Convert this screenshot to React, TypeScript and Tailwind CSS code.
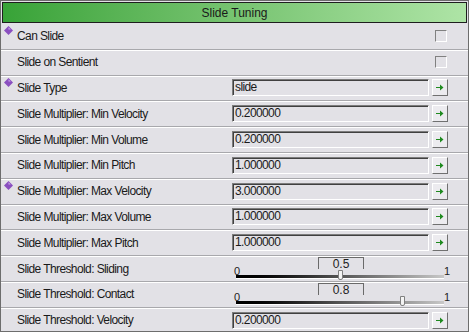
import React from "react"

type Row =
  | { label: string; kind: "check"; mark?: boolean }
  | { label: string; kind: "text"; value: string; mark?: boolean }
  | { label: string; kind: "slider"; value: number; mark?: boolean }

const rows: Row[] = [
  { label: "Can Slide", kind: "check", mark: true },
  { label: "Slide on Sentient", kind: "check" },
  { label: "Slide Type", kind: "text", value: "slide", mark: true },
  { label: "Slide Multiplier: Min Velocity", kind: "text", value: "0.200000" },
  { label: "Slide Multiplier: Min Volume", kind: "text", value: "0.200000" },
  { label: "Slide Multiplier: Min Pitch", kind: "text", value: "1.000000" },
  { label: "Slide Multiplier: Max Velocity", kind: "text", value: "3.000000", mark: true },
  { label: "Slide Multiplier: Max Volume", kind: "text", value: "1.000000" },
  { label: "Slide Multiplier: Max Pitch", kind: "text", value: "1.000000" },
  { label: "Slide Threshold: Sliding", kind: "slider", value: 0.5 },
  { label: "Slide Threshold: Contact", kind: "slider", value: 0.8 },
  { label: "Slide Threshold: Velocity", kind: "text", value: "0.200000" },
]

const Diamond = () => (
  <svg width="9" height="9" viewBox="0 0 8 8" className="absolute left-[3px] top-[2px]">
    <path d="M4 0 L8 4 L4 8 L0 4 Z" fill="#8a4fc0" />
    <path d="M4 1 L6 3 L4 3 Z" fill="#c9a6ea" />
  </svg>
)

const ArrowButton = () => (
  <div className="w-[16px] h-[17px] bg-[#ecebef] border border-t-white border-l-white border-r-[#707070] border-b-[#707070] flex items-center justify-center">
    <svg width="8" height="7" viewBox="0 0 8 7">
      <path d="M0 3h4V0.5L7.5 3.5 4 6.5V4H0Z" fill="#1f8a1f" />
    </svg>
  </div>
)

const Checkbox = () => (
  <div className="w-[12px] h-[12px] border border-t-[#808080] border-l-[#808080] border-r-white border-b-white bg-[#e2e1e6]" />
)

const Slider = ({ value }: { value: number }) => (
  <div className="relative w-full h-full">
    <div className="absolute left-[86px] top-[1px] w-[46px] h-[12px] border-t border-l border-r border-[#6a6a6a] text-center text-[12px] leading-[12px] text-[#222]">
      {value}
    </div>
    <span className="absolute left-[2px] top-[9px] text-[11px] leading-[12px] text-[#222]">0</span>
    <span className="absolute right-[18px] top-[9px] text-[11px] leading-[12px] text-[#222]">1</span>
    <div className="absolute left-[4px] right-[24px] top-[19px] h-[4px] bg-gradient-to-r from-[#000] via-[#555] to-[#c8c8c8] border-b border-white" />
    <div
      className="absolute top-[14px] w-[5px] h-[10px] bg-[#f4f4f4] border border-[#808080] rounded-b-[2px]"
      style={{ left: `${4 + value * 208 - 2}px` }}
    />
  </div>
)

export default function App() {
  return (
    <div
      className="w-[469px] h-[332px] bg-[#e2e1e6] border border-[#6d6d6d] overflow-hidden text-[12px] text-[#1a1a1a]"
      style={{ fontFamily: '"Liberation Sans", Arial, sans-serif' }}
    >
      <div className="h-[21px] border border-[#1e1e1e] m-px mt-[1px] bg-gradient-to-r from-[#37a337] to-[#aee4a6] flex items-center justify-center text-[12px] leading-none">
        Slide Tuning
      </div>
      {rows.map((r) => (
        <div key={r.label} className="relative h-[25.8px] flex items-center border-b border-[#a8a8ac] shadow-[0_1px_0_#ffffff]">
          {r.mark && <Diamond />}
          <div className="w-[231px] pl-[16px] whitespace-nowrap tracking-[-0.6px]">{r.label}</div>
          {r.kind === "check" && (
            <div className="flex-1 flex justify-end pr-[21px]">
              <Checkbox />
            </div>
          )}
          {r.kind === "text" && (
            <div className="flex-1 flex items-center gap-[3px] pr-[20px]">
              <div className="flex-1 h-[17px] border border-t-[#7c7c7c] border-l-[#7c7c7c] border-r-white border-b-white bg-[#e2e1e6] px-[2px] leading-[15px] tracking-[-0.6px] shadow-[inset_1px_1px_0_#404040]">
                {r.value}
              </div>
              <ArrowButton />
            </div>
          )}
          {r.kind === "slider" && (
            <div className="flex-1 h-full">
              <Slider value={r.value} />
            </div>
          )}
        </div>
      ))}
    </div>
  )
}
